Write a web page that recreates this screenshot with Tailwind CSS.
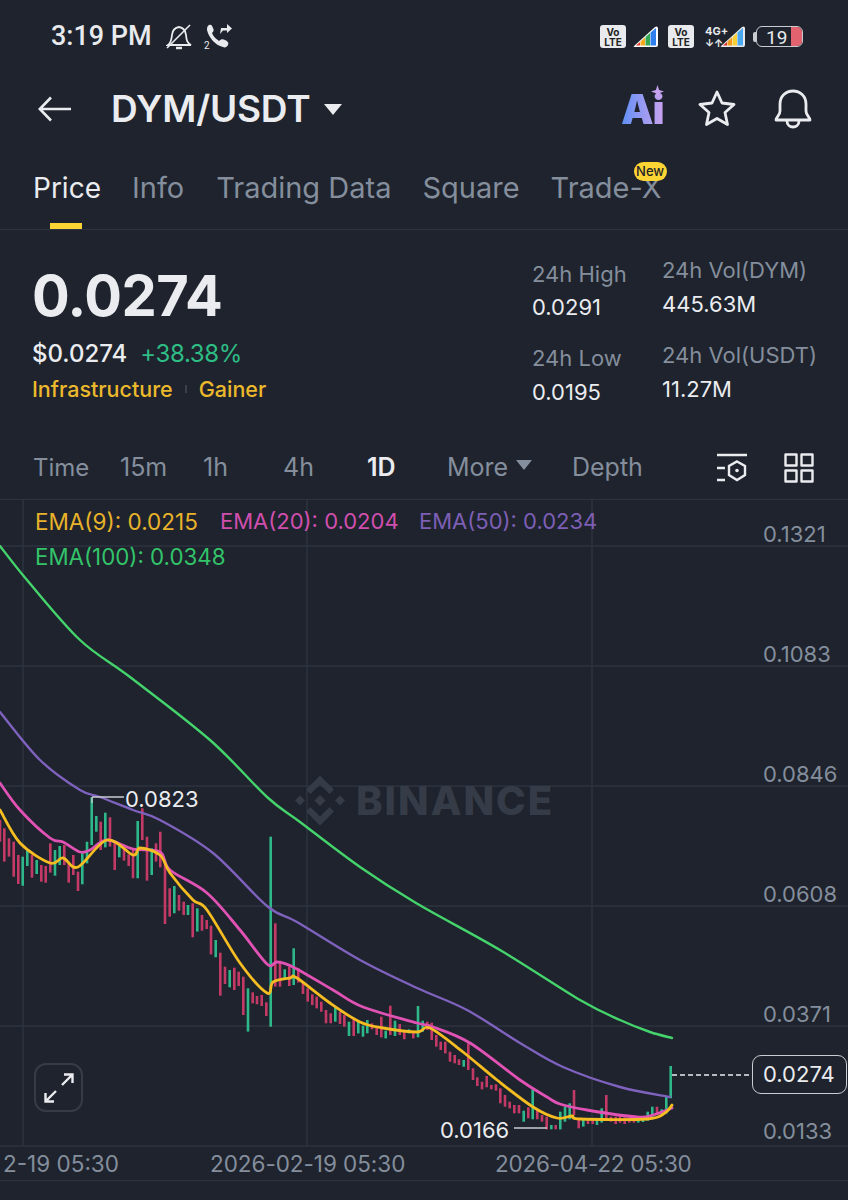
<!DOCTYPE html>
<html lang="en">
<head>
  <meta charset="UTF-8" />
  <meta name="viewport" content="width=device-width, initial-scale=1.0" />
  <title>DYM/USDT</title>
  <script src="https://cdn.jsdelivr.net/npm/@tailwindcss/browser@4"></script>
</head>
<body class="bg-[#1e232d]">
  <div class="w-[848px] h-[1200px] overflow-hidden flex flex-col bg-[#1e232d] text-[#eaecef] font-['Inter','Liberation_Sans',sans-serif]">

    <!-- status bar -->
    <div class="h-[74px] shrink-0 flex items-center pl-[51px] pb-[1px]">
      <span class="text-[27px] font-medium font-['Roboto',sans-serif] w-[115px] text-[#e8eaed]">3:19 PM</span>
      <svg width="26" height="28" viewBox="0 0 26 28" fill="none" stroke="#e8eaed" stroke-width="1.8">
        <path d="M2 22 C5 20 5.500 17 6 12 C6.500 7 9 4.500 13 4 C17 4.500 19.500 7 20 12 C20.500 17 21 20 25 22 Z" />
        <path d="M10 25 H16" stroke-width="2.400" />
        <path d="M1 25 L24 2" stroke-width="1.600" />
      </svg>
      <svg class="ml-[12px]" width="28" height="28" viewBox="0 0 28 28" fill="#e8eaed">
        <path d="M5 2 C7 1 8 2 9 5 C10 7 10 8 8 10 C9 13 12 16 15 18 C17 16 19 16 21 17 C24 18 25 20 24 22 C23 24 21 25 19 24 C11 22 5 15 3 7 C3 5 3 3 5 2 Z" />
        <path d="M17 5 H23 V1 L28 5.500 L23 10 V7.500 H19 L16 11 Z" />
        <text x="0" y="26" font-size="10" font-family="Roboto" stroke="none">2</text>
      </svg>
      <div class="ml-auto mr-[45px] flex items-center">
        <div class="w-[26px] h-[23px] rounded-[3px] bg-[#e8eaed] text-[#222] text-[10px] font-bold leading-[10px] text-center pt-[2px]">Vo<br>LTE</div>
        <svg class="ml-[6px]" width="27" height="23" viewBox="0 0 27 23">
          <path d="M1.500 21.500 L23 2 Q25.500 0.500 26 3 V20 Q26 22 24 22 H2.500 Z" fill="#fff" />
          <path d="M4 20.500 L8 17 V20.500 Z" fill="#e5392c" />
          <path d="M8.500 16.500 L13 12.500 V20.500 H8.500 Z" fill="#f4a81d" />
          <path d="M13.500 12 L18 8 V20.500 H13.500 Z" fill="#34a853" />
          <path d="M18.500 7.500 L24 3 V20.500 H18.500 Z" fill="#2f80ed" />
        </svg>
        <div class="ml-[9px] w-[26px] h-[23px] rounded-[3px] bg-[#e8eaed] text-[#222] text-[10px] font-bold leading-[10px] text-center pt-[2px]">Vo<br>LTE</div>
        <div class="ml-[11px] w-[22px] flex flex-col items-start">
          <span class="text-[11px] font-bold leading-[13px] text-[#e8eaed]">4G+</span>
          <span class="text-[10px] font-bold leading-[11px] text-[#e8eaed]">↓↑</span>
        </div>
        <svg class="-ml-[8px]" width="27" height="23" viewBox="0 0 27 23">
          <path d="M1.500 21.500 L23 2 Q25.500 0.500 26 3 V20 Q26 22 24 22 H2.500 Z" fill="#e8eaed" />
          <path d="M4 20.500 L8 17 V20.500 Z" fill="#d93025" />
          <path d="M8.500 16.500 L13 12.500 V20.500 H8.500 Z" fill="#f09a1a" />
          <path d="M13.500 12 L18 8 V20.500 H13.500 Z" fill="#f7d038" />
          <path d="M18.500 7.500 L24 3 V20.500 H18.500 Z" fill="#4aa8f0" />
        </svg>
        <div class="ml-[10px] relative w-[47px] h-[21px] rounded-[6px] border border-[#c9ccd1] text-[19px] leading-[21px] text-[#e8eaed] pl-[9px] font-['Roboto',sans-serif]">
          19
          <div class="absolute right-0 top-0 bottom-0 w-[11px] bg-[#e2626f] rounded-r-[5px]"></div>
          <div class="absolute -left-[4px] top-[5px] w-[3px] h-[10px] bg-[#c9ccd1] rounded-l-[2px]"></div>
        </div>
      </div>
    </div>

    <!-- title bar -->
    <div class="h-[70px] shrink-0 flex items-center pl-[38px]">
      <svg width="34" height="26" viewBox="0 0 34 26" fill="none" stroke="#eaecef" stroke-width="2.600">
        <path d="M33 13 H2 M13 1.500 L1.800 13 L13 24.500" />
      </svg>
      <span class="ml-[39px] text-[37px] font-semibold leading-[44px] tracking-[-0.2px]">DYM/USDT</span>
      <svg class="ml-[13px] mt-[1px]" width="20" height="13" viewBox="0 0 20 13" fill="#eaecef">
        <path d="M1 1 H19 L10 12 Z" />
      </svg>
      <div class="ml-auto mr-[36px] flex items-center">
        <div class="relative w-[42px] h-[44px]">
          <span class="absolute left-[2px] top-0 text-[41px] leading-[44px] font-black tracking-[-1px] bg-linear-to-r from-[#5c8ff5] to-[#c9a2ef] bg-clip-text text-transparent">Ai</span>
          <svg class="absolute left-[32px] -top-[2px]" width="13" height="13" viewBox="0 0 12 12" fill="#c9a2ef">
            <path d="M6 0 L7.500 4.500 L12 6 L7.500 7.500 L6 12 L4.500 7.500 L0 6 L4.500 4.500 Z" />
          </svg>
        </div>
        <svg class="ml-[37px] mb-[2px]" width="38" height="36" viewBox="0 0 38 36" fill="none" stroke="#eaecef" stroke-width="2.800" stroke-linejoin="round">
          <path d="M19 2 L24 13 L36 14.500 L27 22.500 L29.500 34.500 L19 28.500 L8.500 34.500 L11 22.500 L2 14.500 L14 13 Z" />
        </svg>
        <svg class="ml-[38px]" width="38" height="40" viewBox="0 0 38 40" fill="none" stroke="#eaecef" stroke-width="2.800" stroke-linejoin="round">
          <path d="M2 31 C2 28 6 27 6 22 V15 C6 7 12 2 19 2 C26 2 32 7 32 15 V22 C32 27 36 28 36 31 Z" />
          <path d="M13 32 C13 40 25 40 25 32" />
        </svg>
      </div>
    </div>

    <!-- tabs -->
    <div class="h-[86px] shrink-0 border-b border-[#2e343f] pl-[33px] relative">
      <div class="flex gap-[31px] pt-[26px] text-[29px] leading-[36px] text-[#848e9c]">
        <span class="text-[#eaecef] text-[28px]">Price</span>
        <span>Info</span>
        <span class="ml-[1px]">Trading Data</span>
        <span>Square</span>
        <span class="relative">Trade-X
          <span class="absolute left-[83px] -top-[8px] w-[33px] h-[19px] rounded-full bg-[#fcd535] text-[#1e2329] text-[13px] font-medium leading-[19px] text-center">New</span>
        </span>
      </div>
      <div class="absolute left-[50px] bottom-0 w-[32px] h-[6px] bg-[#fcd535]"></div>
    </div>

    <!-- price block -->
    <div class="h-[210px] shrink-0 flex pl-[32px]">
      <div class="w-[500px] pt-[36px]">
        <div class="text-[56px] font-bold leading-[60px] tracking-[-0.5px]">0.0274</div>
        <div class="mt-[13px] flex gap-[13px] text-[24px] leading-[30px]">
          <span class="font-medium">$0.0274</span>
          <span class="text-[#2ebd85] tracking-[-0.4px]">+38.38%</span>
        </div>
        <div class="mt-[5px] flex items-center text-[21.5px] font-medium leading-[30px] text-[#ecb92c]">
          <span>Infrastructure</span>
          <span class="mx-[12px] w-[2px] h-[8px] bg-[#3a404c]"></span>
          <span>Gainer</span>
        </div>
      </div>
      <div class="w-[130px] pt-[29px] text-[22px] leading-[30px]">
        <div class="text-[#848e9c]">24h High</div>
        <div class="mt-[3px]">0.0291</div>
        <div class="mt-[21px] text-[#848e9c]">24h Low</div>
        <div class="mt-[4px]">0.0195</div>
      </div>
      <div class="pt-[25px] text-[22px] leading-[30px]">
        <div class="text-[#848e9c]">24h Vol(DYM)</div>
        <div class="mt-[4px]">445.63M</div>
        <div class="mt-[21px] text-[#848e9c]">24h Vol(USDT)</div>
        <div class="mt-[4px]">11.27M</div>
      </div>
    </div>

    <!-- interval row -->
    <div class="h-[59px] shrink-0 flex items-center pl-[33px] text-[25px] text-[#848e9c] pb-[4px]">
      <span class="w-[87px] text-[24px]">Time</span>
      <span class="w-[83px]">15m</span>
      <span class="w-[80px]">1h</span>
      <span class="w-[84px]">4h</span>
      <span class="w-[80px] text-[#eaecef] font-semibold">1D</span>
      <span class="w-[69px]">More</span>
      <svg class="mb-[5px]" width="16" height="11" viewBox="0 0 16 11" fill="#848e9c"><path d="M0 0 H16 L8 10 Z" /></svg>
      <span class="ml-[40px] w-[145px]">Depth</span>
      <svg width="31" height="30" viewBox="0 0 31 30" fill="none" stroke="#eaecef" stroke-width="2.400">
        <path d="M0 2 H30 M0 15 H8 M0 27 H8" />
        <path d="M20 8.500 L28 13 V22 L20 27 L12 22 V13 Z" />
        <circle cx="20" cy="17.500" r="1.800" fill="#eaecef" stroke="none" />
      </svg>
      <svg class="ml-[36px]" width="30" height="30" viewBox="0 0 30 30" fill="none" stroke="#eaecef" stroke-width="2.400" stroke-linejoin="round">
        <rect x="1.500" y="1.500" width="11" height="11" /><rect x="17.500" y="1.500" width="11" height="11" />
        <rect x="1.500" y="17.500" width="11" height="11" /><rect x="17.500" y="17.500" width="11" height="11" />
      </svg>
    </div>

    <!-- chart -->
    <div class="relative h-[648px] shrink-0 border-t border-[#2e343f]">
      <svg class="absolute left-0 -top-[1px]" width="848" height="648" viewBox="0 499 848 648" fill="none">
        <g stroke="#2e343f" stroke-width="1.500">
          <path d="M0 546 H848 M0 666 H848 M0 786 H848 M0 906 H848 M0 1026 H848 M0 1146 H848" />
          <path d="M23 499 V1146 M307 499 V1146 M592 499 V1146" />
        </g>
        <!-- watermark -->
        <g fill="#363c47" transform="translate(320 800.500)">
          <path d="M0 -25 L14 -11 L9.500 -6.500 L0 -16 L-9.500 -6.500 L-14 -11 Z" />
          <path d="M0 25 L14 11 L9.500 6.500 L0 16 L-9.500 6.500 L-14 11 Z" />
          <path d="M0 -5.500 L5.500 0 L0 5.500 L-5.500 0 Z" />
          <path d="M-20 -5 L-15 0 L-20 5 L-25 0 Z" />
          <path d="M20 -5 L25 0 L20 5 L15 0 Z" />
        </g>
        <text x="356" y="815" fill="#363c47" font-size="40" font-weight="800" letter-spacing="2">BINANCE</text>
        <g id="candles"></g>
        <g stroke-width="2.400" stroke-linecap="round">
          <path class="ema" stroke="#45d46c" data-pts="0,546 27,580 80,640 130,677 210,740 267,797 300,822 360,867 416,903 500,950 580,1000 620,1020 650,1032 672,1038" />
          <path class="ema" stroke="#7f62bd" data-pts="0,712 40,760 80,790 100,797 133,810 160,820 213,853 267,906 297,922 360,960 417,988 467,1010 520,1043 563,1067 620,1087 670,1097" />
          <path class="ema" stroke="#e052b4" stroke-width="2.800" data-pts="0,783 20,810 50,838 63,842 80,852 90,850 107,840 133,849 160,852 170,870 207,893 240,930 267,964 277,962 293,967 333,990 363,1007 417,1023 433,1027 470,1043 520,1080 547,1097 560,1104 587,1110 637,1117 653,1115 672,1108" />
          <path class="ema" stroke="#f5bd22" stroke-width="2.800" data-pts="0,810 20,843 50,863 63,858 78,867 107,840 133,855 140,848 160,855 170,873 193,900 207,910 240,963 267,993 273,982 290,978 297,978 330,1003 360,1022 383,1028 417,1032 430,1028 463,1052 497,1080 533,1107 557,1118 572,1116 580,1119 647,1119 665,1113 672,1105" />
        </g>
        <!-- high / low markers -->
        <path d="M92 797 H124 M514 1128 H547" stroke="#c9ccd1" stroke-width="1.300" />
        <path d="M92 797 V803" stroke="#c9ccd1" stroke-width="1.300" />
        <text x="125" y="807" fill="#eaecef" font-size="22">0.0823</text>
        <text x="440" y="1138" fill="#eaecef" font-size="22">0.0166</text>
        <path d="M672 1075 H752" stroke="#eaecef" stroke-width="1.300" stroke-dasharray="5 3" />
        <g fill="#848e9c" font-size="22">
          <text x="763" y="542">0.1321</text>
          <text x="763" y="662">0.1083</text>
          <text x="763" y="782">0.0846</text>
          <text x="763" y="902">0.0608</text>
          <text x="763" y="1022">0.0371</text>
          <text x="763" y="1139">0.0133</text>
        </g>
      </svg>

      <!-- EMA legend -->
      <div class="absolute left-[35px] top-[4px] text-[22px] leading-[35px]">
        <div class="flex">
          <span class="w-[185px] text-[22.5px] text-[#e8b32a]">EMA(9): 0.0215</span>
          <span class="w-[199px] text-[#d04fae]">EMA(20): 0.0204</span>
          <span class="text-[#7d5fb5]">EMA(50): 0.0234</span>
        </div>
        <div class="text-[22.3px] text-[#33c46a]">EMA(100): 0.0348</div>
      </div>

      <!-- last price tag -->
      <div class="absolute left-[752px] top-[555px] w-[95px] h-[39px] rounded-[9px] border border-[#c9ccd1] bg-[#1e232d] text-[22px] leading-[37px] pl-[10px]">0.0274</div>

      <!-- fullscreen button -->
      <div class="absolute left-[34px] top-[563px] w-[49px] h-[49px] rounded-[12px] border-2 border-[#363c47] flex items-center justify-center">
        <svg width="32" height="32" viewBox="0 0 32 32" fill="none" stroke="#eaecef" stroke-width="2.400">
          <path d="M19 13 L29 3 M21 2.500 H29.500 V11" />
          <path d="M13 19 L3 29 M2.500 21 V29.500 H11" />
        </svg>
      </div>
    </div>

    <!-- time axis -->
    <div class="h-[34px] shrink-0 border-b border-[#2e343f] flex items-center pl-[3px] text-[22.5px] leading-[30px] text-[#848e9c]">
      <span class="w-[207px]">2-19 05:30</span>
      <span class="w-[285px] tracking-[-0.05px]">2026-02-19 05:30</span>
      <span class="tracking-[-0.25px]">2026-04-22 05:30</span>
    </div>
  </div>

  <script>
    // [x, top, bottom, colour] read off the chart, three stretches with their own offset
    const stretches = [
      { ox: 0, oy: 760, bars: "0,180,245,r 13,205,305,r 27,235,290,r 41,245,350,r 55,285,372,r 68,290,377,g 82,270,318,g 96,285,353,r 110,300,342,g 124,315,365,r 137,318,368,r 151,250,338,r 165,270,347,g 179,258,315,g 193,255,315,r 206,305,368,r 220,285,345,r 234,335,393,r 247,280,373,g 261,245,310,g 275,112,255,g 289,168,215,g 302,185,270,r 316,158,262,g 330,172,260,r 344,250,330,r 358,258,292,g 372,265,302,r 386,283,318,r 399,268,355,r 413,183,355,g 427,145,240,r 441,230,362,r 455,265,345,g 468,250,305,r 481,215,322,r 495,300,492,r 509,385,470,r 523,378,460,g 537,405,452,r 551,425,465,r 564,435,465,g 578,430,532,r 592,445,515,g 606,465,512,r 620,480,507,r 633,497,583,r 647,540,592,g 661,578,707,r 675,620,672,r 689,630,682,g 703,623,690,r 716,635,678,r 730,650,765,r 744,685,815,g 758,697,730,r 771,708,733,r 785,705,738,r 799,727,768,r 812,230,800,g" },
      { ox: 250, oy: 760, bars: "76,490,680,r 90,602,680,r 104,628,660,g 118,620,678,r 131,565,675,g 145,625,668,r 159,665,702,r 173,685,725,r 187,703,735,r 200,710,745,r 214,725,755,r 228,750,790,r 242,760,790,r 256,740,785,g 270,755,792,r 283,765,800,r 297,785,828,g 311,775,828,r 325,785,820,g 339,797,830,g 352,780,820,g 366,790,808,r 380,800,825,r 394,770,832,r 407,812,835,g 421,737,825,r 435,782,828,g 449,792,825,r 463,810,838,r 477,808,820,g 490,815,835,r 504,738,832,g 518,782,815,g" },
      { ox: 420, oy: 1000, bars: "22,65,90,r 35,68,120,r 49,105,140,r 62,125,150,r 76,125,160,r 90,155,185,r 104,165,190,r 117,178,195,r 131,180,200,g 145,130,210,r 159,205,240,r 172,232,258,r 186,245,268,r 200,228,262,r 214,255,268,r 228,253,272,r 241,265,310,r 255,285,320,r 269,305,325,r 283,315,340,r 297,315,340,r 311,332,365,g 325,322,355,r 338,268,358,g 352,328,358,r 366,345,365,r 380,350,388,r 394,375,388,g 407,375,388,r 421,335,388,g 435,320,365,g 449,310,358,g 462,270,345,r 476,355,385,r 490,358,380,g 504,358,372,r 518,358,372,r 531,358,375,g 545,325,368,g 559,285,360,r 573,350,365,r 587,350,372,r 600,348,368,r 614,352,372,r 628,355,368,r 642,358,368,r 655,355,368,g 669,350,366,g 683,335,362,g 697,320,350,g 711,320,345,r 725,328,345,g 739,290,340,g 752,198,295,g" },
    ];
    const colours = { r: "#c33a66", g: "#2eb88a" };
    let out = "";
    stretches.forEach((s) => {
      s.bars.split(" ").forEach((b) => {
        const [x, top, bottom, c] = b.split(",");
        out += `<rect x="${(s.ox + x / 3 - 1.3).toFixed(1)}" y="${(s.oy + top / 3).toFixed(1)}" width="2.6" height="${((bottom - top) / 3).toFixed(1)}" fill="${colours[c]}"/>`;
      });
    });
    document.getElementById("candles").innerHTML = out;

    // smooth the EMA lines through their points (catmull-rom)
    document.querySelectorAll(".ema").forEach((line) => {
      const p = line.dataset.pts.split(" ").map((s) => s.split(",").map(Number));
      let d = `M${p[0][0]} ${p[0][1]}`;
      for (let i = 0; i < p.length - 1; i++) {
        const a = p[i - 1] || p[i], b = p[i], c = p[i + 1], e = p[i + 2] || c;
        d += ` C${b[0] + (c[0] - a[0]) / 6} ${b[1] + (c[1] - a[1]) / 6} ${c[0] - (e[0] - b[0]) / 6} ${c[1] - (e[1] - b[1]) / 6} ${c[0]} ${c[1]}`;
      }
      line.setAttribute("d", d);
    });
  </script>
</body>
</html>
